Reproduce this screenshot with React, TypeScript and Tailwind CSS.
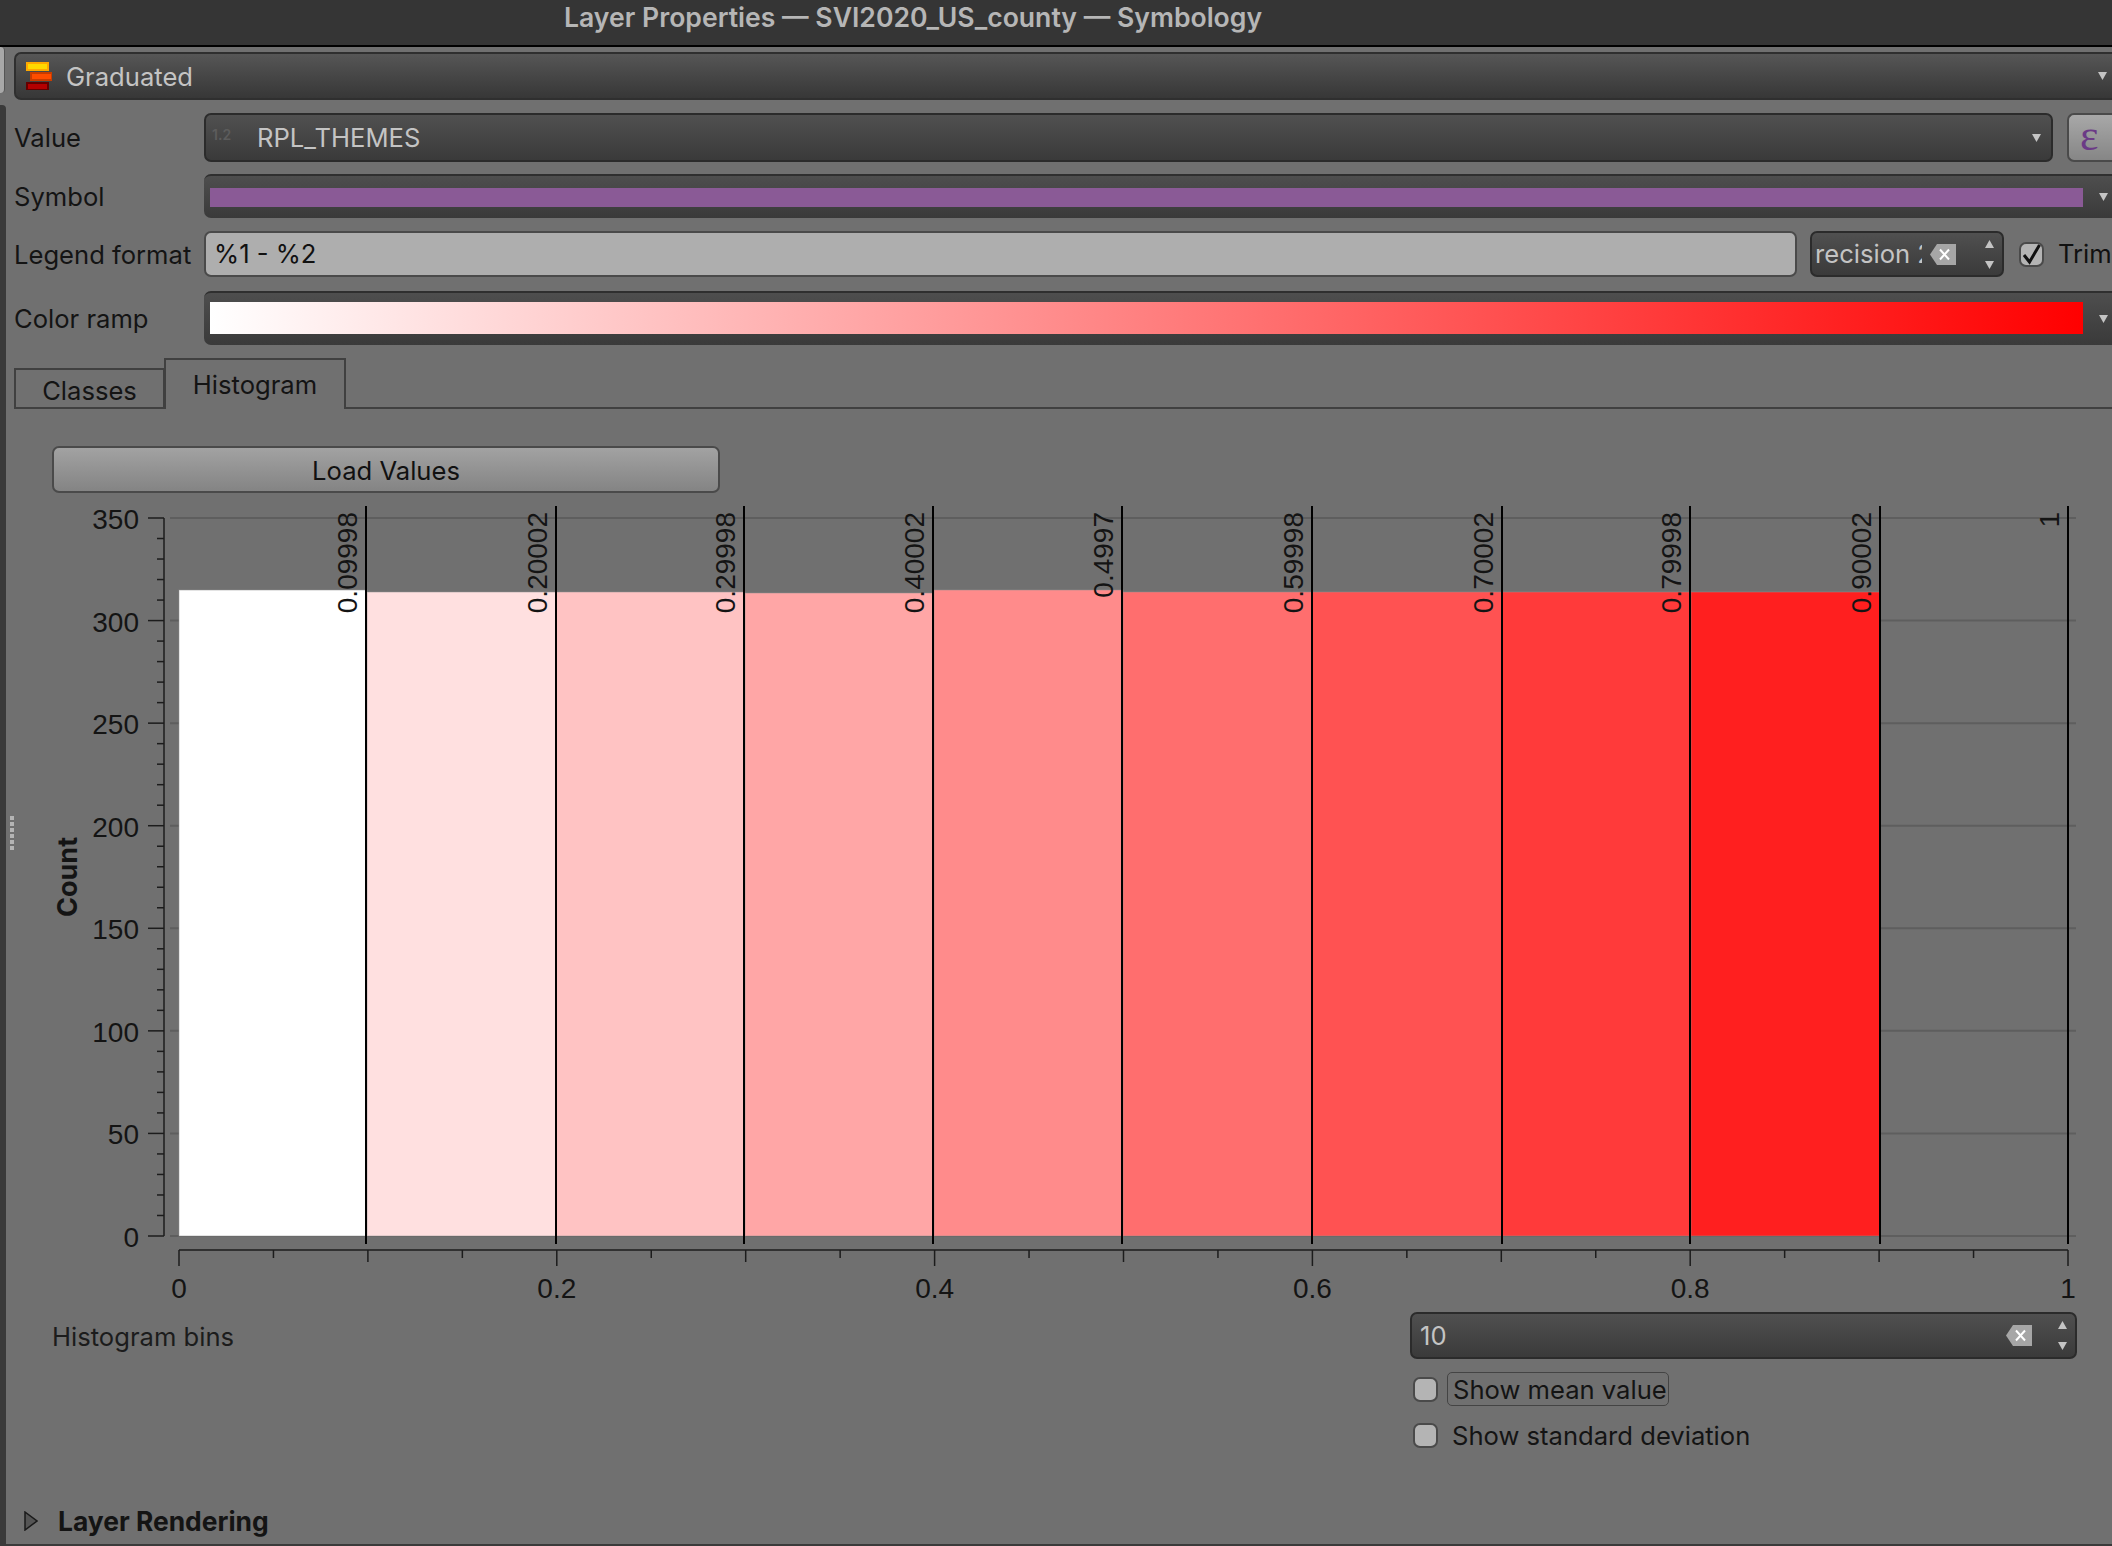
const chartFont = "'Liberation Sans', Arial, sans-serif";

// the svg viewBox uses page coordinates, so these read straight off the screenshot
const x0 = 179;
const x1 = 2068;
const yBase = 1236;
const pxPerCount = 718 / 350;

const xAt = (v: number) => x0 + (x1 - x0) * v;
const yAt = (count: number) => yBase - count * pxPerCount;

const bars = [
  { from: 179, to: 367, top: 590, color: "#ffffff" },
  { from: 367, to: 556, top: 592, color: "#ffe0e0" },
  { from: 556, to: 745, top: 592, color: "#ffc3c3" },
  { from: 745, to: 934, top: 593, color: "#ffa6a6" },
  { from: 934, to: 1123, top: 590, color: "#ff8b8b" },
  { from: 1123, to: 1312, top: 592, color: "#ff6e6e" },
  { from: 1312, to: 1502, top: 592, color: "#ff5252" },
  { from: 1502, to: 1691, top: 592, color: "#ff3a3a" },
  { from: 1691, to: 1880, top: 592, color: "#ff1f1f" },
];

const breaks = [
  { x: 366, label: "0.09998" },
  { x: 556, label: "0.20002" },
  { x: 744, label: "0.29998" },
  { x: 933, label: "0.40002" },
  { x: 1122, label: "0.4997" },
  { x: 1312, label: "0.59998" },
  { x: 1502, label: "0.70002" },
  { x: 1690, label: "0.79998" },
  { x: 1880, label: "0.90002" },
  { x: 2068, label: "1" },
];

function Arrow({ up = false }: { up?: boolean }) {
  return (
    <svg width="9" height="8" viewBox="0 0 9 8" className="shrink-0 block">
      <polygon points={up ? "4.5,0 9,8 0,8" : "0,0 9,0 4.5,8"} fill="#c4c4c4" />
    </svg>
  );
}

function ClearIcon() {
  return (
    <svg width="26" height="21" viewBox="0 0 26 21" className="shrink-0 block">
      <polygon points="7,0 26,0 26,21 7,21 0,10.5" fill="#a6a6a6" />
      <path d="M10 5.5 L19 15.5 M19 5.5 L10 15.5" stroke="#ffffff" strokeWidth="2" />
    </svg>
  );
}

function Spinner() {
  return (
    <div className="flex flex-col gap-[13px] shrink-0">
      <Arrow up />
      <Arrow />
    </div>
  );
}

function CheckBox({ checked = false }: { checked?: boolean }) {
  return (
    <div className="w-[25px] h-[25px] shrink-0 rounded-[7px] border-2 border-[#4a4a4a] bg-[#b4b4b4] flex items-center justify-center">
      {checked && (
        <svg width="21" height="21" viewBox="0 0 21 21">
          <path d="M3 11 L8.5 18 L18.5 1" fill="none" stroke="#111111" strokeWidth="3" />
        </svg>
      )}
    </div>
  );
}

function RowLabel({ children }: { children: React.ReactNode }) {
  return <div className="w-[191px] shrink-0 pt-[2px] text-[#141414] whitespace-nowrap">{children}</div>;
}

function Histogram() {
  const yTicks = Array.from({ length: 36 }, (_, i) => i * 10);
  const xTicks = Array.from({ length: 21 }, (_, i) => i);
  return (
    <svg width="2112" height="812" viewBox="0 500 2112 812" className="block shrink-0">
      {[0, 50, 100, 150, 200, 250, 300, 350].map((c) => (
        <line key={c} x1={170} x2={2076} y1={yAt(c)} y2={yAt(c)} stroke="#5e5e5e" strokeWidth={2} />
      ))}
      {bars.map((b) => (
        <rect
          key={b.from}
          x={b.from}
          y={b.top}
          width={b.to - b.from}
          height={yBase - b.top}
          fill={b.color}
          stroke="#8f8f8f"
          strokeOpacity={0.5}
          strokeWidth={1}
        />
      ))}
      {/* y axis */}
      <line x1={164} x2={164} y1={yAt(350)} y2={yBase} stroke="#1c1c1c" strokeWidth={1.5} />
      {yTicks.map((c) => (
        <line
          key={c}
          x1={c % 50 === 0 ? 148 : 157}
          x2={164}
          y1={yAt(c)}
          y2={yAt(c)}
          stroke="#1c1c1c"
          strokeWidth={1.5}
        />
      ))}
      {[0, 50, 100, 150, 200, 250, 300, 350].map((c) => (
        <text key={c} x={139} y={yAt(c) + 11} textAnchor="end" fontFamily={chartFont} fontSize={28} fill="#141414">
          {c}
        </text>
      ))}
      <text
        transform="translate(77 877) rotate(-90)"
        textAnchor="middle"
        fontFamily="Inter, sans-serif"
        fontWeight={700}
        fontSize={27}
        fill="#141414"
      >
        Count
      </text>
      {/* x axis */}
      <line x1={x0} x2={x1} y1={1250} y2={1250} stroke="#1c1c1c" strokeWidth={1.5} />
      {xTicks.map((i) => (
        <line
          key={i}
          x1={xAt(i / 20)}
          x2={xAt(i / 20)}
          y1={1250}
          y2={i % 4 === 0 ? 1266 : i % 2 === 0 ? 1262 : 1258}
          stroke="#1c1c1c"
          strokeWidth={1.5}
        />
      ))}
      {[0, 0.2, 0.4, 0.6, 0.8, 1].map((v) => (
        <text key={v} x={xAt(v)} y={1298} textAnchor="middle" fontFamily={chartFont} fontSize={28} fill="#141414">
          {v}
        </text>
      ))}
      {/* class breaks */}
      {breaks.map((b) => (
        <g key={b.x}>
          <line x1={b.x} x2={b.x} y1={506} y2={1244} stroke="#000000" strokeWidth={2} />
          <text
            transform={`translate(${b.x - 9} 512) rotate(-90)`}
            textAnchor="end"
            fontFamily={chartFont}
            fontSize={28}
            fill="#141414"
          >
            {b.label}
          </text>
        </g>
      ))}
    </svg>
  );
}

export default function App() {
  return (
    <div className="w-[2112px] h-[1546px] bg-[#707070] flex flex-col overflow-hidden font-['Inter','Liberation_Sans',sans-serif] text-[25.6px] leading-none">
      <div className="h-[47px] shrink-0 bg-[#353535] border-b-2 border-black pl-[564px] pt-[4px] text-[26.6px] text-[#b6b6b6] font-semibold whitespace-nowrap">
        Layer Properties — SVI2020_US_county — Symbology
      </div>

      <div className="flex-1 flex min-h-0 relative border-b-2 border-[#3a3a3a]">
        {/* left splitter rail */}
        <div className="w-[6px] shrink-0 flex flex-col">
          <div className="h-[46px] w-[5px] rounded-r-[4px] bg-[#a8a8a8] border-r border-[#555555]" />
          <div className="flex-1 mt-[12px] rounded-tr-[4px] bg-[#3a3a3a]" />
        </div>
        <div className="absolute left-[10px] top-[769px] flex flex-col gap-[2px]">
          {[0, 1, 2, 3, 4, 5].map((i) => (
            <div key={i} className="w-[4px] h-[4px] bg-[#b4b4b4]" />
          ))}
        </div>

        <div className="flex-1 min-w-0 flex flex-col overflow-hidden">
          {/* renderer type */}
          <div className="mt-[5px] ml-[8px] h-[48px] shrink-0 rounded-l-[7px] border-2 border-[#2f2f2f] border-r-0 bg-linear-to-b from-[#565656] to-[#373737] flex items-center pl-[10px] pr-[5px]">
            <svg width="26" height="28" viewBox="0 0 26 28" className="shrink-0 block">
              <rect x="1" y="1" width="21" height="7" fill="#ffd800" stroke="#ffa800" strokeWidth="2" />
              <rect x="5" y="11" width="21" height="7" fill="#ff4d00" stroke="#c83c00" strokeWidth="2" />
              <rect x="1" y="21" width="21" height="7" fill="#b40000" stroke="#640000" strokeWidth="2" />
            </svg>
            <div className="ml-[14px] pt-[2px] text-[#c4c4c4]">Graduated</div>
            <div className="ml-auto">
              <Arrow />
            </div>
          </div>

          {/* value */}
          <div className="mt-[13px] ml-[8px] h-[49px] shrink-0 flex items-center">
            <div className="w-[191px] shrink-0 text-[#141414] whitespace-nowrap">Value</div>
            <div className="w-[1849px] h-full shrink-0 -ml-px rounded-[7px] border-2 border-[#2b2b2b] bg-linear-to-b from-[#505050] to-[#3a3a3a] flex items-center pl-[6px] pr-[10px]">
              <div className="w-[45px] shrink-0 text-[14px] font-semibold text-[#5c5c5c] -mt-[6px]">1.2</div>
              <div className="text-[#c4c4c4]">RPL_THEMES</div>
              <div className="ml-auto">
                <Arrow />
              </div>
            </div>
            <div className="w-[60px] h-full shrink-0 ml-[14px] rounded-l-[7px] border-2 border-[#4a4a4a] border-r-0 bg-linear-to-b from-[#a8a8a8] to-[#868686] flex items-center pl-[11px] pb-[4px] font-['Liberation_Serif',serif] text-[44px] text-[#6b3a86]">
              ε
            </div>
          </div>

          {/* symbol */}
          <div className="mt-[12px] ml-[8px] h-[44px] shrink-0 flex items-center">
            <RowLabel>Symbol</RowLabel>
            <div className="flex-1 h-full -ml-px rounded-l-[7px] border-t-2 border-[#2f2f2f] bg-linear-to-b from-[#4e4e4e] to-[#3a3a3a] flex items-center pl-[6px] pr-[4px]">
              <div className="w-[1873px] h-[19px] shrink-0 bg-[#8a5a96]" />
              <div className="ml-auto">
                <Arrow />
              </div>
            </div>
          </div>

          {/* legend format */}
          <div className="mt-[13px] ml-[8px] h-[46px] shrink-0 flex items-center">
            <RowLabel>Legend format</RowLabel>
            <div className="w-[1593px] h-full shrink-0 -ml-px rounded-[7px] border-2 border-[#4a4a4a] bg-[#aeaeae] flex items-center pl-[8px] text-[#111111]">
              %1 - %2
            </div>
            <div className="w-[194px] h-full shrink-0 ml-[13px] rounded-[7px] border-2 border-[#2b2b2b] bg-linear-to-b from-[#505050] to-[#3a3a3a] flex items-center pl-[3px] pr-[8px]">
              <div className="w-[107px] shrink-0 overflow-hidden whitespace-nowrap text-[#c4c4c4]">recision 2</div>
              <div className="ml-[8px]">
                <ClearIcon />
              </div>
              <div className="ml-auto">
                <Spinner />
              </div>
            </div>
            <div className="ml-[15px]">
              <CheckBox checked />
            </div>
            <div className="ml-[14px] text-[#111111] whitespace-nowrap">Trim</div>
          </div>

          {/* color ramp */}
          <div className="mt-[14px] ml-[8px] h-[54px] shrink-0 flex items-center">
            <RowLabel>Color ramp</RowLabel>
            <div className="flex-1 h-full -ml-px rounded-l-[7px] border-t-2 border-[#2f2f2f] bg-linear-to-b from-[#4e4e4e] to-[#3a3a3a] flex items-center pl-[6px] pr-[4px]">
              <div className="w-[1873px] h-[32px] shrink-0 mb-[2px] bg-linear-to-r/srgb from-white to-[#ff0000]" />
              <div className="ml-auto">
                <Arrow />
              </div>
            </div>
          </div>

          {/* tabs */}
          <div className="mt-[13px] ml-[8px] h-[51px] shrink-0 flex items-end border-b-2 border-[#404040]">
            <div className="w-[151px] h-[41px] -mb-[2px] border-2 border-[#404040] flex items-center justify-center pt-[5px] text-[#141414]">
              Classes
            </div>
            <div className="w-[182px] h-[51px] -mb-[2px] -ml-[1px] border-2 border-b-0 border-[#404040] bg-[#707070] flex items-center justify-center text-[#141414]">
              Histogram
            </div>
          </div>

          {/* load button */}
          <div className="mt-[37px] ml-[46px] w-[668px] h-[47px] shrink-0 rounded-[7px] border-2 border-[#4a4a4a] bg-linear-to-b from-[#a2a2a2] to-[#848484] flex items-center justify-center pt-[2px] text-[#111111]">
            Load Values
          </div>

          <div className="mt-[7px] -ml-[6px]">
            <Histogram />
          </div>

          {/* bins */}
          <div className="ml-[46px] h-[47px] shrink-0 flex items-center">
            <div className="w-[1358px] shrink-0 pt-[2px] text-[#1c1c1c]">Histogram bins</div>
            <div className="w-[667px] h-full shrink-0 rounded-[7px] border-2 border-[#2b2b2b] bg-linear-to-b from-[#505050] to-[#3a3a3a] flex items-center pl-[8px] pr-[8px]">
              <div className="text-[#c4c4c4]">10</div>
              <div className="ml-auto mr-[26px]">
                <ClearIcon />
              </div>
              <Spinner />
            </div>
          </div>

          <div className="mt-[13px] ml-[1407px] h-[34px] shrink-0 flex items-center">
            <CheckBox />
            <div className="ml-[9px] w-[222px] h-full rounded-[5px] border border-[#444444] flex items-center px-[5px] pt-[2px] text-[#141414] whitespace-nowrap">
              Show mean value
            </div>
          </div>

          <div className="mt-[12px] ml-[1407px] h-[34px] shrink-0 flex items-center">
            <CheckBox />
            <div className="ml-[14px] pt-[2px] text-[#141414] whitespace-nowrap">Show standard deviation</div>
          </div>

          <div className="mt-[56px] ml-[18px] flex items-center">
            <svg width="14" height="20" viewBox="0 0 14 20" className="shrink-0 block">
              <polygon points="1,1 13,10 1,19" fill="#555555" stroke="#1a1a1a" strokeWidth="1.5" />
            </svg>
            <div className="ml-[20px] text-[26.4px] font-bold text-[#141414] whitespace-nowrap">Layer Rendering</div>
          </div>
        </div>
      </div>
    </div>
  );
}
